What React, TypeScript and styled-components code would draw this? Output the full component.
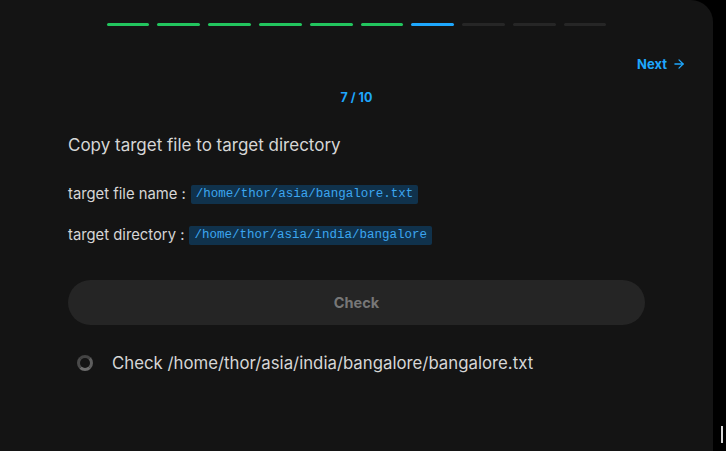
import React from "react";
import styled, { createGlobalStyle } from "styled-components";

const Global = createGlobalStyle`
  html, body { margin: 0; padding: 0; background: #000; }
  body { font-family: Inter, "Noto Sans", sans-serif; }
  #root { height: 451px; }
`;

const Page = styled.div`
  display: flex;
  width: 726px;
  height: 451px;
  background: #000;
  overflow: hidden;
`;

const Panel = styled.div`
  width: 713px;
  height: 451px;
  background: #141414;
  border-top-right-radius: 22px;
  display: flex;
  flex-direction: column;
  box-sizing: border-box;
  padding: 23px 0 0 0;
`;

const Gutter = styled.div`
  flex: 1;
  display: flex;
  flex-direction: column;
  justify-content: flex-end;
  align-items: flex-end;
  padding: 0 3px 8px 0;
`;

const Caret = styled.div`
  width: 2px;
  height: 17px;
  background: #d8d8d8;
`;

const Progress = styled.div`
  display: flex;
  justify-content: center;
  gap: 8px;
`;

const Seg = styled.div<{ $state: "done" | "active" | "todo" }>`
  width: 42.8px;
  height: 3px;
  border-radius: 1.5px;
  background: ${(p) =>
    p.$state === "done" ? "#22c55e" : p.$state === "active" ? "#1ea7fd" : "#262626"};
`;

const NextRow = styled.div`
  display: flex;
  justify-content: flex-end;
  padding: 30px 27px 0 0;
`;

const NextBtn = styled.button`
  display: flex;
  align-items: center;
  gap: 5px;
  background: none;
  border: none;
  padding: 0;
  color: #1ea7fd;
  font-family: Inter, sans-serif;
  font-weight: 700;
  font-size: 13px;
  cursor: pointer;
`;

const Counter = styled.div`
  text-align: center;
  color: #1ea7fd;
  font-weight: 700;
  font-size: 12.5px;
  margin-top: 18px;
`;

const Body = styled.div`
  padding: 0 68px;
  display: flex;
  flex-direction: column;
`;

const Title = styled.div`
  color: #d6d6d6;
  font-size: 17px;
  margin-top: 30px;
  line-height: 20px;
`;

const Field = styled.div<{ $mt: number }>`
  display: flex;
  align-items: center;
  gap: 5px;
  color: #d6d6d6;
  font-size: 14.8px;
  margin-top: ${(p) => p.$mt}px;
  line-height: 19px;
`;

const Code = styled.span`
  background: #10324c;
  color: #3ca6f0;
  font-family: "Liberation Mono", "DejaVu Sans Mono", monospace;
  font-size: 12.5px;
  padding: 1px 5px;
  border-radius: 2px;
  line-height: 17px;
`;

const CheckButton = styled.button`
  margin-top: 35px;
  height: 45px;
  width: 577px;
  border: none;
  border-radius: 23px;
  background: #252525;
  color: #777;
  font-family: Inter, sans-serif;
  font-weight: 700;
  font-size: 14.5px;
`;

const Status = styled.div`
  display: flex;
  align-items: center;
  gap: 19px;
  margin-top: 28px;
  padding-left: 9px;
  color: #d6d6d6;
  font-size: 16.8px;
  line-height: 20px;
`;

const Ring = styled.div`
  width: 10px;
  height: 10px;
  border-radius: 50%;
  border: 3px solid #5e5e5e;
  border-top-color: #444;
  border-left-color: #4a4a4a;
  border-bottom-color: #6c6c6c;
`;

const ArrowIcon = () => (
  <svg width="14" height="14" viewBox="0 0 24 24" fill="none" stroke="currentColor" strokeWidth="2.2" strokeLinecap="round" strokeLinejoin="round">
    <path d="M5 12h14" />
    <path d="M12 5l7 7-7 7" />
  </svg>
);

const steps: ("done" | "active" | "todo")[] = [
  "done", "done", "done", "done", "done", "done", "active", "todo", "todo", "todo",
];

export default function App() {
  return (
    <>
      <Global />
      <Page>
        <Panel>
          <Progress>
            {steps.map((s, i) => (
              <Seg key={i} $state={s} />
            ))}
          </Progress>
          <NextRow>
            <NextBtn>
              Next <ArrowIcon />
            </NextBtn>
          </NextRow>
          <Counter>7 / 10</Counter>
          <Body>
            <Title>Copy target file to target directory</Title>
            <Field $mt={30}>
              target file name : <Code>/home/thor/asia/bangalore.txt</Code>
            </Field>
            <Field $mt={22}>
              target directory : <Code>/home/thor/asia/india/bangalore</Code>
            </Field>
            <CheckButton>Check</CheckButton>
            <Status>
              <Ring />
              <span>Check /home/thor/asia/india/bangalore/bangalore.txt</span>
            </Status>
          </Body>
        </Panel>
        <Gutter>
          <Caret />
        </Gutter>
      </Page>
    </>
  );
}
